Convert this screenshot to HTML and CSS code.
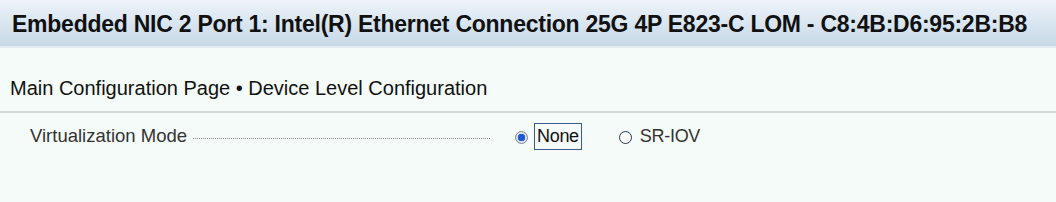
FILE: index.html
```html
<!DOCTYPE html>
<html>
<head>
<meta charset="utf-8">
<link rel="stylesheet" href="styles.css">
</head>
<body>
<div class="header">
  <h1 class="title">Embedded NIC 2 Port 1: Intel(R) Ethernet Connection 25G 4P E823-C LOM - C8:4B:D6:95:2B:B8</h1>
</div>
<div class="content">
  <h2 class="crumb">Main Configuration Page • Device Level Configuration</h2>
  <div class="rule"></div>
  <div class="row">
    <div class="label">Virtualization Mode</div>
    <div class="leader"></div>
    <div class="options">
      <label class="opt">
        <span class="radio checked"></span>
        <span class="opt-text focus">None</span>
      </label>
      <label class="opt">
        <span class="radio"></span>
        <span class="opt-text">SR-IOV</span>
      </label>
    </div>
  </div>
</div>
</body>
</html>
```

FILE: styles.css
```css
html, body {
  margin: 0;
  padding: 0;
  background: #f5fbf8;
  font-family: "Liberation Sans", Arial, sans-serif;
}
.header {
  height: 46px;
  background: linear-gradient(to bottom, #eef4f9 0%, #dbe7f1 45%, #c7d8e7 100%);
  border-bottom: 2px solid #e4ecf1;
  display: flex;
  align-items: center;
  padding-left: 12px;
}
.title {
  margin: 0;
  font-size: 23px;
  font-weight: bold;
  color: #111;
  letter-spacing: -0.25px;
  white-space: nowrap;
  padding-top: 2px;
}
.content {
  padding-top: 28px;
}
.crumb {
  margin: 0 0 0 10px;
  font-size: 20px;
  font-weight: normal;
  color: #111;
  line-height: 24px;
}
.rule {
  margin-top: 11px;
  height: 2px;
  background: #d4d7d4;
}
.row {
  display: flex;
  align-items: center;
  height: 46px;
  padding-left: 30px;
}
.label {
  font-size: 18.5px;
  color: #333;
  letter-spacing: 0;
  width: 157px;
  white-space: nowrap;
}
.leader {
  width: 297px;
  margin-left: 6px;
  border-bottom: 1px dotted #888;
  margin-top: 5px;
}
.options {
  display: flex;
  align-items: center;
  margin-left: 25px;
}
.opt {
  display: flex;
  align-items: center;
  margin-right: 37px;
}
.radio {
  box-sizing: border-box;
  width: 13px;
  height: 13px;
  border: 1px solid #1f3550;
  border-radius: 50%;
  background: #fff;
  margin-right: 6px;
  margin-top: 2px;
}
.radio.checked {
  border-color: #7c8898;
  background: radial-gradient(circle, #2457d8 0 3.5px, #d9e0ee 4px);
  margin-right: 6px;
}
.opt-text {
  font-size: 18px;
  color: #333;
  letter-spacing: -0.3px;
  line-height: 21px;
  padding: 2px 1px;
  border: 1px solid transparent;
}
.opt-text.focus {
  border: 1px solid #3a5c8c;
  color: #111;
  padding: 2px 2px;
}
```
